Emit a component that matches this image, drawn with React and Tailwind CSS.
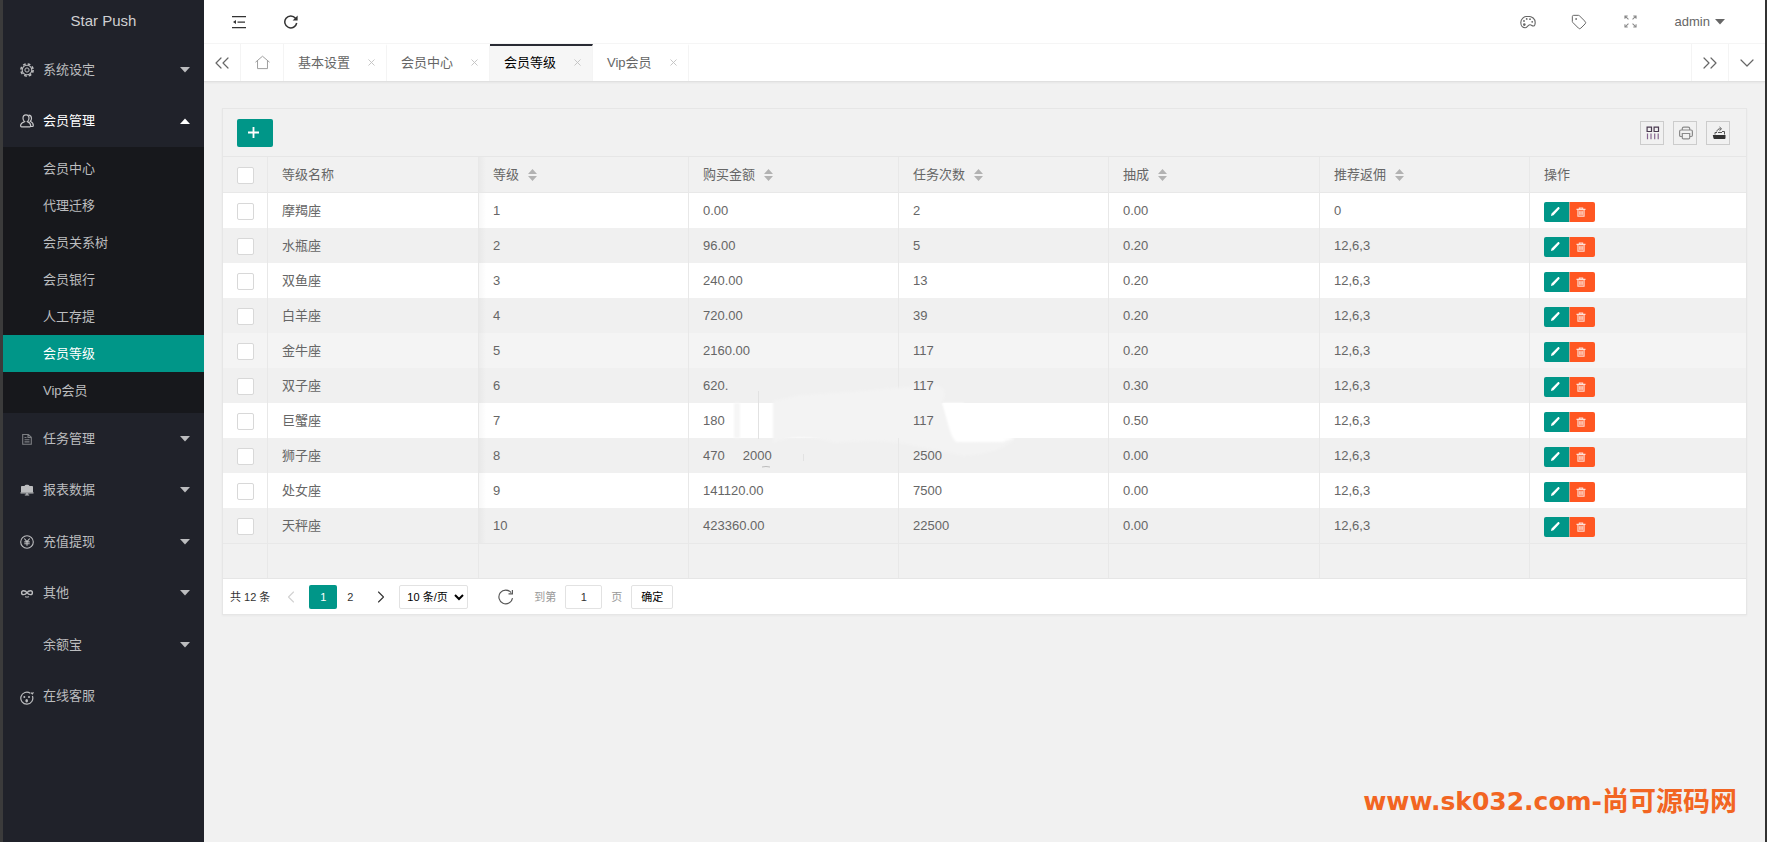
import React from 'react'
import clsx from 'clsx'
import { ChevronDown, ChevronLeft, ChevronRight, ChevronsLeft, ChevronsRight, Tag, X } from 'lucide-react'

const GearIcon = () => (
  <svg viewBox="0 0 14 14" className="h-[14px] w-[14px]" fill="none" stroke="currentColor">
    <circle cx="7" cy="7" r="6.100" strokeWidth="1.600" strokeDasharray="2.700 2.090" />
    <circle cx="7" cy="7" r="4.800" strokeWidth="1.100" />
    <circle cx="7" cy="7" r="2.100" strokeWidth="1" />
  </svg>
)

const UserIcon = () => (
  <svg viewBox="0 0 14 14" className="h-[14px] w-[14px] text-[#c8c8ca]" fill="none" stroke="currentColor" strokeWidth="1.2">
    <path d="M4.6 7.6C3.4 6.6 3 5.4 3 4.2 3 2.2 4.300.9 6 .9s3 1.3 3 3.3c0 1.2-.4 2.400-1.600 3.400 2 .8 3.300 2.200 3.300 4.200 0 .7-.3 1-.9 1H1.500c-.6 0-.9-.3-.9-1 0-2 1.800-3.400 4-4.200z" />
    <path d="M8.600 1.200c1.700.1 2.900 1.300 2.900 3.100 0 1.200-.4 2.200-1.200 2.900 1.900.9 3 2.300 3 4.300 0 .7-.4 1-1 1h-1.500" />
  </svg>
)

const DocIcon = () => (
  <svg viewBox="0 0 14 14" className="h-[14px] w-[14px] opacity-60" fill="none" stroke="currentColor" strokeWidth="1.1">
    <path d="M2.700 2.500h5.600l3 2.800v6.900H2.700zM8 2.500v3h3M4.500 5.500h2M4.500 7.700h5M4.500 9.900h5" />
  </svg>
)

const BoardIcon = () => (
  <svg viewBox="0 0 14 14" className="h-[14px] w-[14px]" fill="currentColor">
    <path d="M1.800 3h2.700c.2-.9 1.100-1.200 2.500-1.200s2.300.3 2.500 1.200h2.700c.5 0 .8.300.8.800v5.500H1V3.800c0-.5.300-.8.800-.8z" />
    <path d="M.5 9.300h13v1.200H.5zM6.300 10.500h1.400v1.400H6.300zM4.800 11.500h4.400v.9H4.800z" />
  </svg>
)

const YenIcon = () => (
  <svg viewBox="0 0 14 14" className="h-[14px] w-[14px]" fill="none" stroke="currentColor" strokeWidth="1.100">
    <circle cx="7" cy="7" r="6.300" />
    <path d="M4.300 3.500 7 6.700l2.700-3.200M7 6.700v4.100M4.300 6.900h5.400M4.300 8.800h5.400" />
  </svg>
)

const LinkIcon = () => (
  <svg viewBox="0 0 14 14" className="h-[14px] w-[14px]" fill="none" stroke="currentColor" strokeWidth="1.400">
    <path d="M7 6.700C6 5.300 4.900 4.800 3.500 4.800a1.900 1.900 0 0 0 0 3.800C4.900 8.600 6 8.100 7 6.700s2.100-1.900 3.500-1.900a1.900 1.900 0 0 1 0 3.800C9.100 8.600 8 8.100 7 6.700z" />
    <path d="M5 10.700c1.200.5 2.800.5 4 0" strokeWidth="1" />
  </svg>
)

const FaceIcon = () => (
  <svg viewBox="0 0 14 14" className="mt-[3px] h-[14px] w-[14px]" fill="none" stroke="currentColor" strokeWidth="1.200">
    <path d="M10.300 2.300A6 6 0 1 0 12.400 5M11 1.800l1.400 1 1-1.600" />
    <g fill="currentColor" stroke="none">
      <circle cx="4.300" cy="6" r="1" />
      <circle cx="9" cy="6" r="1" />
      <ellipse cx="6.700" cy="9.800" rx="1.300" ry="1.700" />
    </g>
  </svg>
)

const FoldIcon = () => (
  <svg viewBox="0 0 14 14" className="h-[14px] w-[14px]" fill="currentColor">
    <path d="M0 1h14v1.300H0zM5.500 6.400H13v1.300H5.500zM0 11.900h14v1.300H0zM1 7l3-2v4z" />
  </svg>
)

const RefreshIcon = ({ thin, className }) => (
  <svg viewBox="0 0 14 14" className={className} fill="none" stroke="currentColor" strokeWidth={thin ? 1 : 1.5}>
    <path d="M12.700 8A6 6 0 1 1 11.500 3.200" />
    <path d={thin ? 'M12.600.8v3.500H9.200' : 'M13.600.6v5H8.600z'} fill={thin ? 'none' : 'currentColor'} stroke={thin ? 'currentColor' : 'none'} />
  </svg>
)

const PaletteIcon = () => (
  <svg viewBox="0 0 16 14" className="h-[14px] w-[16px]" fill="none" stroke="currentColor" strokeWidth="1.100">
    <path d="M8 1.200C3.800 1.200.8 4 .8 7.600c0 3 1.900 5.200 4.300 5.200 2.100 0 2.500-2.600 4.700-3 1.600-.3 2.400 1.600 3.700 1.200 1-.3 1.700-1.800 1.700-3.600C15.200 3.900 12.200 1.200 8 1.200z" />
    <circle cx="4.300" cy="9.600" r="1.300" fill="currentColor" stroke="none" />
    <circle cx="4" cy="6" r=".9" fill="currentColor" stroke="none" />
    <circle cx="6.700" cy="3.900" r=".9" fill="currentColor" stroke="none" />
    <circle cx="10" cy="4.200" r=".9" fill="currentColor" stroke="none" />
    <circle cx="12.200" cy="6.800" r=".9" fill="currentColor" stroke="none" />
  </svg>
)

const HomeIcon = () => (
  <svg viewBox="0 0 16 16" className="h-[15px] w-[15px] text-[#999]" fill="none" stroke="currentColor" strokeWidth="1">
    <path d="M.5 7.700 8 1.300l7.500 6.400M2.700 6v8.500h10.600V6" />
  </svg>
)

const ExpandIcon = () => (
  <svg viewBox="0 0 14 14" className="h-[13px] w-[13px] text-[#888]" fill="none" stroke="currentColor" strokeWidth="1.100">
    <path d="M1 4V1h3M1 1l3.800 3.800M10 1h3v3M13 1 9.200 4.800M1 10v3h3M1 13l3.800-3.800M13 10v3h-3M13 13 9.200 9.200" />
  </svg>
)

const ColumnsIcon = () => (
  <svg viewBox="0 0 14 14" className="ml-[2px] h-[14px] w-[14px]" fill="none" stroke="#4a3a50" strokeWidth="1.200">
    <path d="M1.100 1.100h4.400v4.400H1.100zM8.100 1.100h4.400v4.400H8.100z" />
    <path d="M1.500 7.500v5.800M5 7.500v5.800M8.700 7.500v5.800M12.200 7.500v5.800" stroke="#86658f" />
  </svg>
)

const PrintIcon = () => (
  <svg viewBox="0 0 14 14" className="ml-[2px] h-[14px] w-[14px] text-[#8a8a8a]" fill="none" stroke="currentColor" strokeWidth="1.200">
    <path d="M3.300 4V2.600c0-1 .5-1.500 1.500-1.500h4.400c1 0 1.500.5 1.500 1.500V4M3 10.500H1.800C1 10.500.6 10 .6 9.300V5.500C.6 4.500 1 4 2 4h10c1 0 1.400.5 1.400 1.500v3.800c0 .7-.4 1.200-1.200 1.200H11" />
    <path d="M3.300 7.500h7.400v4.300c0 .7-.4 1.100-1.100 1.100H4.400c-.7 0-1.100-.4-1.100-1.100z" />
  </svg>
)

const ExportIcon = () => (
  <svg viewBox="0 0 14 14" className="ml-[2px] h-[14px] w-[14px]" fill="#333">
    <path d="M1.300 9h12.200v2.500c0 1-.4 1.500-1.400 1.500H3c-1 0-1.500-.5-1.700-1.500L.8 9z" />
    <path fill="none" stroke="#555" d="M3 8.500V6.500h2M12.500 8.500v-3H10M4.800 5.500C5.300 3.500 6.500 2.800 8.500 2.800M7.500 1l2 1.800-2 1.900M6 6.500h4" />
  </svg>
)

const PencilIcon = () => (
  <svg viewBox="0 0 12 12" className="mr-[2px] h-[11px] w-[11px]" fill="currentColor">
    <path d="M1 11l.7-2.900L8.300 1.500c.6-.6 1.200-.6 1.800 0s.6 1.200 0 1.800L3.800 10z" />
  </svg>
)

const TrashIcon = () => (
  <svg viewBox="0 0 12 12" className="mr-[4px] h-[10px] w-[10px]" fill="none" stroke="currentColor" strokeWidth="1.300">
    <path d="M.6 2.800h10.800M4 2.500V1.200h4v1.300M2.300 3v8h7.400V3M4.700 5v4.200M7.300 5v4.200" />
    <path d="M3 4h6v6.500H3z" fill="currentColor" fillOpacity=".4" stroke="none" />
  </svg>
)

const Caret = ({ up, className }) => (
  <svg viewBox="0 0 10 6" className={clsx('h-[6px] w-[10px]', className)} fill="currentColor">
    <path d={up ? 'M0 6 5 .5l5 5.500z' : 'M0 0h10L5 5.500z'} />
  </svg>
)

const SortIcon = () => (
  <svg viewBox="0 0 9 12" className="h-[12px] w-[9px]" fill="#b2b2b2">
    <path d="M0 5 4.500 0 9 5zM0 7h9l-4.500 5z" />
  </svg>
)

// worn patch that lies over the middle rows
const Patch = () => (
  <svg viewBox="0 0 340 76" className="pointer-events-none absolute -top-[18px] left-0 h-[76px] w-[340px] overflow-visible">
    <defs>
      <filter id="soft" x="-5%" y="-20%" width="110%" height="140%">
        <feGaussianBlur stdDeviation="1" />
      </filter>
    </defs>
    <path filter="url(#soft)" fill="#f3f3f3" d="M84 56V16L110 10 170 6 240 0c14 0 20 4 13 18 6 14 8 24 16 38l56-1c-8 8-24 14-50 16l-45-9c-30-8-60-6-84-4-24-8-50-6-62 0z" />
    <path filter="url(#soft)" fill="#fff" d="M254 18h20l30 32 22 3c-4 2-8 2-12 4h-46c-6-2-10-22-14-39z" />
    <path filter="url(#soft)" fill="#f6f6f6" d="M45 18h6v35h-6z" />
    <path stroke="#e2e2e2" d="M69.500 6v48M114.500 69v7" />
    <path stroke="#bbb" fill="none" d="M73 82q4-1 8 0" />
  </svg>
)

const subItems = ['会员中心', '代理迁移', '会员关系树', '会员银行', '人工存提', '会员等级', 'Vip会员']

const topMenu = [
  { name: '系统设定', icon: <GearIcon /> },
  { name: '会员管理', icon: <UserIcon />, open: true },
]

const restMenu = [
  { name: '任务管理', icon: <DocIcon /> },
  { name: '报表数据', icon: <BoardIcon /> },
  { name: '充值提现', icon: <YenIcon /> },
  { name: '其他', icon: <LinkIcon /> },
  { name: '余额宝' },
  { name: '在线客服', icon: <FaceIcon />, leaf: true },
]

const tabs = ['基本设置', '会员中心', '会员等级', 'Vip会员']

const columns = [
  { title: '等级名称' },
  { title: '等级', sort: true },
  { title: '购买金额', sort: true },
  { title: '任务次数', sort: true },
  { title: '抽成', sort: true },
  { title: '推荐返佣', sort: true },
  { title: '操作' },
]

const rows = [
  { name: '摩羯座', level: 1, price: '0.00', tasks: 2, cut: '0.00', rebate: '0' },
  { name: '水瓶座', level: 2, price: '96.00', tasks: 5, cut: '0.20', rebate: '12,6,3' },
  { name: '双鱼座', level: 3, price: '240.00', tasks: 13, cut: '0.20', rebate: '12,6,3' },
  { name: '白羊座', level: 4, price: '720.00', tasks: 39, cut: '0.20', rebate: '12,6,3' },
  { name: '金牛座', level: 5, price: '2160.00', tasks: 117, cut: '0.20', rebate: '12,6,3', hover: true },
  { name: '双子座', level: 6, price: '620.', tasks: 117, cut: '0.30', rebate: '12,6,3' },
  { name: '巨蟹座', level: 7, price: '180', tasks: 117, cut: '0.50', rebate: '12,6,3', patch: true },
  { name: '狮子座', level: 8, price: '470', extra: '2000', tasks: 2500, cut: '0.00', rebate: '12,6,3' },
  { name: '处女座', level: 9, price: '141120.00', tasks: 7500, cut: '0.00', rebate: '12,6,3' },
  { name: '天秤座', level: 10, price: '423360.00', tasks: 22500, cut: '0.00', rebate: '12,6,3' },
]

const MenuItem = ({ item }) => (
  <li className="h-[51px] even:h-[52px]">
    <a href="#" className={clsx('flex h-full items-center pr-[14px] pl-[17px]', item.open ? 'text-white' : 'text-[#bcbdbf]')}>
      <span className="flex w-[23px] shrink-0 items-center">{item.icon}</span>
      <span className="flex-1">{item.name}</span>
      {!item.leaf && <Caret up={item.open} />}
    </a>
  </li>
)

const Sidebar = () => (
  <aside className="w-[201px] shrink-0 bg-[#20222a]">
    <div className="flex h-[44px] items-center justify-center pb-[3px] text-[15px] text-[#d0d0d2]">Star Push</div>
    <nav>
      <ul>
        {topMenu.map((item) => <MenuItem key={item.name} item={item} />)}
      </ul>
      <ul className="bg-[#17181c] pt-[3px] pb-1">
        {subItems.map((name) => (
          <li key={name}>
            <a
              href="#"
              className={clsx('flex h-[37px] items-center pl-[40px]', name === '会员等级' ? 'bg-[#009688] text-white' : 'text-[#bcbdbf]')}
            >
              {name}
            </a>
          </li>
        ))}
      </ul>
      <ul>
        {restMenu.map((item) => <MenuItem key={item.name} item={item} />)}
      </ul>
    </nav>
  </aside>
)

const Header = () => (
  <header className="flex h-[44px] items-center border-b border-[#f5f5f5] bg-white pr-[40px] pl-[28px] text-[#333]">
    <button type="button" aria-label="menu"><FoldIcon /></button>
    <button type="button" aria-label="refresh" className="ml-[38px]"><RefreshIcon className="h-[14px] w-[14px]" /></button>
    <div className="ml-auto flex items-center text-[#666]">
      <button type="button" aria-label="theme"><PaletteIcon /></button>
      <button type="button" aria-label="note" className="ml-[35px]"><Tag size={16} strokeWidth={1.5} /></button>
      <button type="button" aria-label="fullscreen" className="ml-[37px]"><ExpandIcon /></button>
      <button type="button" className="ml-[38px] flex items-center gap-[5px]">
        admin
        <Caret />
      </button>
    </div>
  </header>
)

const TabBar = () => (
  <div className="flex h-[38px] border-b border-[#e0e0e0] bg-white text-[#666] shadow-[0_1px_2px_rgba(0,0,0,0.05)]">
    <button type="button" aria-label="left" className="flex w-[37px] items-center justify-center border-r border-[#f4f4f4]">
      <ChevronsLeft size={24} strokeWidth={1.2} />
    </button>
    <button type="button" aria-label="home" className="flex w-[43px] items-center justify-center border-r border-[#f4f4f4]">
      <HomeIcon />
    </button>
    {tabs.map((tab) => {
      const active = tab === '会员等级'
      return (
        <div
          key={tab}
          className={clsx(
            'flex items-center border-t-2 border-r border-r-[#f4f4f4] pr-[9px] pb-[2px] pl-[14px]',
            active ? 'border-t-[#292b34] bg-[#f6f6f6] text-black' : 'border-t-transparent'
          )}
        >
          <a href="#">{tab}</a>
          <button type="button" aria-label="close" className="ml-[16px] text-[#c2c2c2]">
            <X size={11} strokeWidth={2} />
          </button>
        </div>
      )
    })}
    <button type="button" aria-label="right" className="ml-auto flex w-[37px] items-center justify-center border-l border-[#f4f4f4]">
      <ChevronsRight size={24} strokeWidth={1.2} />
    </button>
    <button type="button" aria-label="more" className="flex w-[37px] items-center justify-center border-l border-[#f4f4f4]">
      <ChevronDown size={24} strokeWidth={1.2} />
    </button>
  </div>
)

const Check = ({ label }) => (
  <input
    type="checkbox"
    aria-label={label}
    className="mt-px block h-[17px] w-[17px] appearance-none rounded-[2px] border border-[#d8d8d8] bg-white checked:bg-[#009688]"
  />
)

const cell = 'border-r border-[#e8e8e8] px-[14px]'
const fixedShade = 'bg-[linear-gradient(to_right,rgba(0,0,0,0.03),transparent_7px)]'

const Toolbar = () => (
  <div className="flex h-[48px] items-center justify-between border-b border-[#e6e6e6] pr-[16px] pl-[14px]">
    <button type="button" aria-label="add" className="flex h-[28px] w-[36px] items-center justify-center rounded-[2px] bg-[#009688] text-white">
      <svg viewBox="0 0 12 12" className="mr-[3px] h-[11px] w-[11px]" stroke="currentColor" strokeWidth="2">
        <path d="M6 0v12M0 6h12" />
      </svg>
    </button>
    <div className="flex gap-[9px]">
      <button type="button" aria-label="columns" className="flex h-[24px] w-[24px] items-center justify-center border border-[#ccc]"><ColumnsIcon /></button>
      <button type="button" aria-label="print" className="flex h-[24px] w-[24px] items-center justify-center border border-[#ccc]"><PrintIcon /></button>
      <button type="button" aria-label="export" className="flex h-[24px] w-[24px] items-center justify-center border border-[#ccc]"><ExportIcon /></button>
    </div>
  </div>
)

const LevelTable = () => (
  <table className="w-full table-fixed border-separate border-spacing-0 text-left">
    <colgroup>
      <col className="w-[45px]" />
      <col className="w-[211px]" />
      <col className="w-[210px]" />
      <col className="w-[210px]" />
      <col className="w-[210px]" />
      <col className="w-[211px]" />
      <col className="w-[210px]" />
      <col />
    </colgroup>
    <thead>
      <tr className="h-[36px]">
        <th className={clsx(cell, 'border-b')}><Check label="全选" /></th>
        {columns.map((col, i) => (
          <th key={col.title} className={clsx(cell, 'border-b font-normal last:border-r-0', i === 1 && fixedShade)}>
            <span className="flex items-center gap-[9px]">
              {col.title}
              {col.sort && <SortIcon />}
            </span>
          </th>
        ))}
      </tr>
    </thead>
    <tbody>
      {rows.map((row) => (
        <tr key={row.level} className={clsx('h-[35px]', row.hover ? 'bg-[#f4f4f4]' : 'odd:bg-white even:bg-[#f0f0f0]')}>
          <td className={cell}><Check label={row.name} /></td>
          <td className={cell}>{row.name}</td>
          <td className={clsx(cell, fixedShade)}>{row.level}</td>
          <td className={clsx(cell, 'relative')}>
            {row.patch && <Patch />}
            <span className="relative z-10">{row.price}</span>
            {row.extra && <span className="relative z-10 ml-[18px]">{row.extra}</span>}
          </td>
          <td className={cell}><span className="relative z-10">{row.tasks}</span></td>
          <td className={cell}>{row.cut}</td>
          <td className={cell}>{row.rebate}</td>
          <td className="px-[14px]">
            <div className="mt-[2px] flex">
              <button type="button" aria-label="edit" className="flex h-[20px] w-[25px] items-center justify-center rounded-l-[2px] bg-[#009688] text-white"><PencilIcon /></button>
              <button type="button" aria-label="delete" className="flex h-[20px] w-[26px] items-center justify-center rounded-r-[2px] border-l border-[#c9a08c] bg-[#ff5722] text-[#ffe0d6]"><TrashIcon /></button>
            </div>
          </td>
        </tr>
      ))}
      <tr className="h-[35px]">
        <td className={clsx(cell, 'border-t')}></td>
        {columns.map((col) => (
          <td key={col.title} className={clsx(cell, 'border-t last:border-r-0')}></td>
        ))}
      </tr>
    </tbody>
  </table>
)

const Pager = () => (
  <div className="flex h-[36px] items-center border-t border-[#e6e6e6] bg-white pl-[7px] text-[11px] text-[#333]">
    <span>共 12 条</span>
    <button type="button" aria-label="prev" className="ml-[9px] flex w-[24px] justify-center text-[#d2d2d2]"><ChevronLeft size={20} strokeWidth={1.3} /></button>
    <button type="button" className="ml-[6px] h-[24px] w-[28px] rounded-[2px] bg-[#009688] text-white">1</button>
    <button type="button" className="h-[24px] w-[26px]">2</button>
    <button type="button" aria-label="next" className="ml-[6px] flex w-[24px] justify-center"><ChevronRight size={20} strokeWidth={1.3} /></button>
    <select aria-label="每页条数" className="ml-[6px] h-[24px] w-[69px] rounded-[2px] border border-[#e2e2e2] bg-white pl-[3px] text-[11px] text-black">
      <option>10 条/页</option>
      <option>20 条/页</option>
    </select>
    <button type="button" aria-label="reload" className="ml-[30px] text-[#555]"><RefreshIcon thin className="h-[16px] w-[16px]" /></button>
    <label className="ml-[20px] flex items-center text-[#999]">
      到第
      <input type="text" defaultValue="1" className="mx-[9px] h-[24px] w-[37px] rounded-[2px] border border-[#e2e2e2] bg-white text-center text-[#333]" />
      页
    </label>
    <button type="button" className="ml-[9px] h-[24px] w-[42px] rounded-[2px] border border-[#e2e2e2] bg-white text-black">确定</button>
  </div>
)

const App = () => {
  return (
    <div className="relative flex min-h-screen border-r-2 border-l-[3px] border-r-[#333] border-l-[#3b3b3b] bg-[#f1f1f1] font-['Liberation_Sans','Noto_Sans_CJK_SC',sans-serif] text-[13px] leading-[20px] text-[#666]">
      <Sidebar />
      <div className="min-w-0 flex-1">
        <Header />
        <TabBar />
        <main className="px-[18px] pt-[26px]">
          <section className="border border-[#e6e6e6] shadow-[0_1px_2px_rgba(0,0,0,0.04)]">
            <Toolbar />
            <LevelTable />
            <Pager />
          </section>
        </main>
      </div>
      <div className="absolute right-[28px] bottom-[22px] flex items-center font-['DejaVu_Sans','Noto_Sans_CJK_SC',sans-serif] text-[25px] leading-[36px] font-bold text-[#f26522]">
        <span>www.sk032.com-</span>
        <span className="text-[27px]">尚可源码网</span>
      </div>
    </div>
  )
}

export default App
